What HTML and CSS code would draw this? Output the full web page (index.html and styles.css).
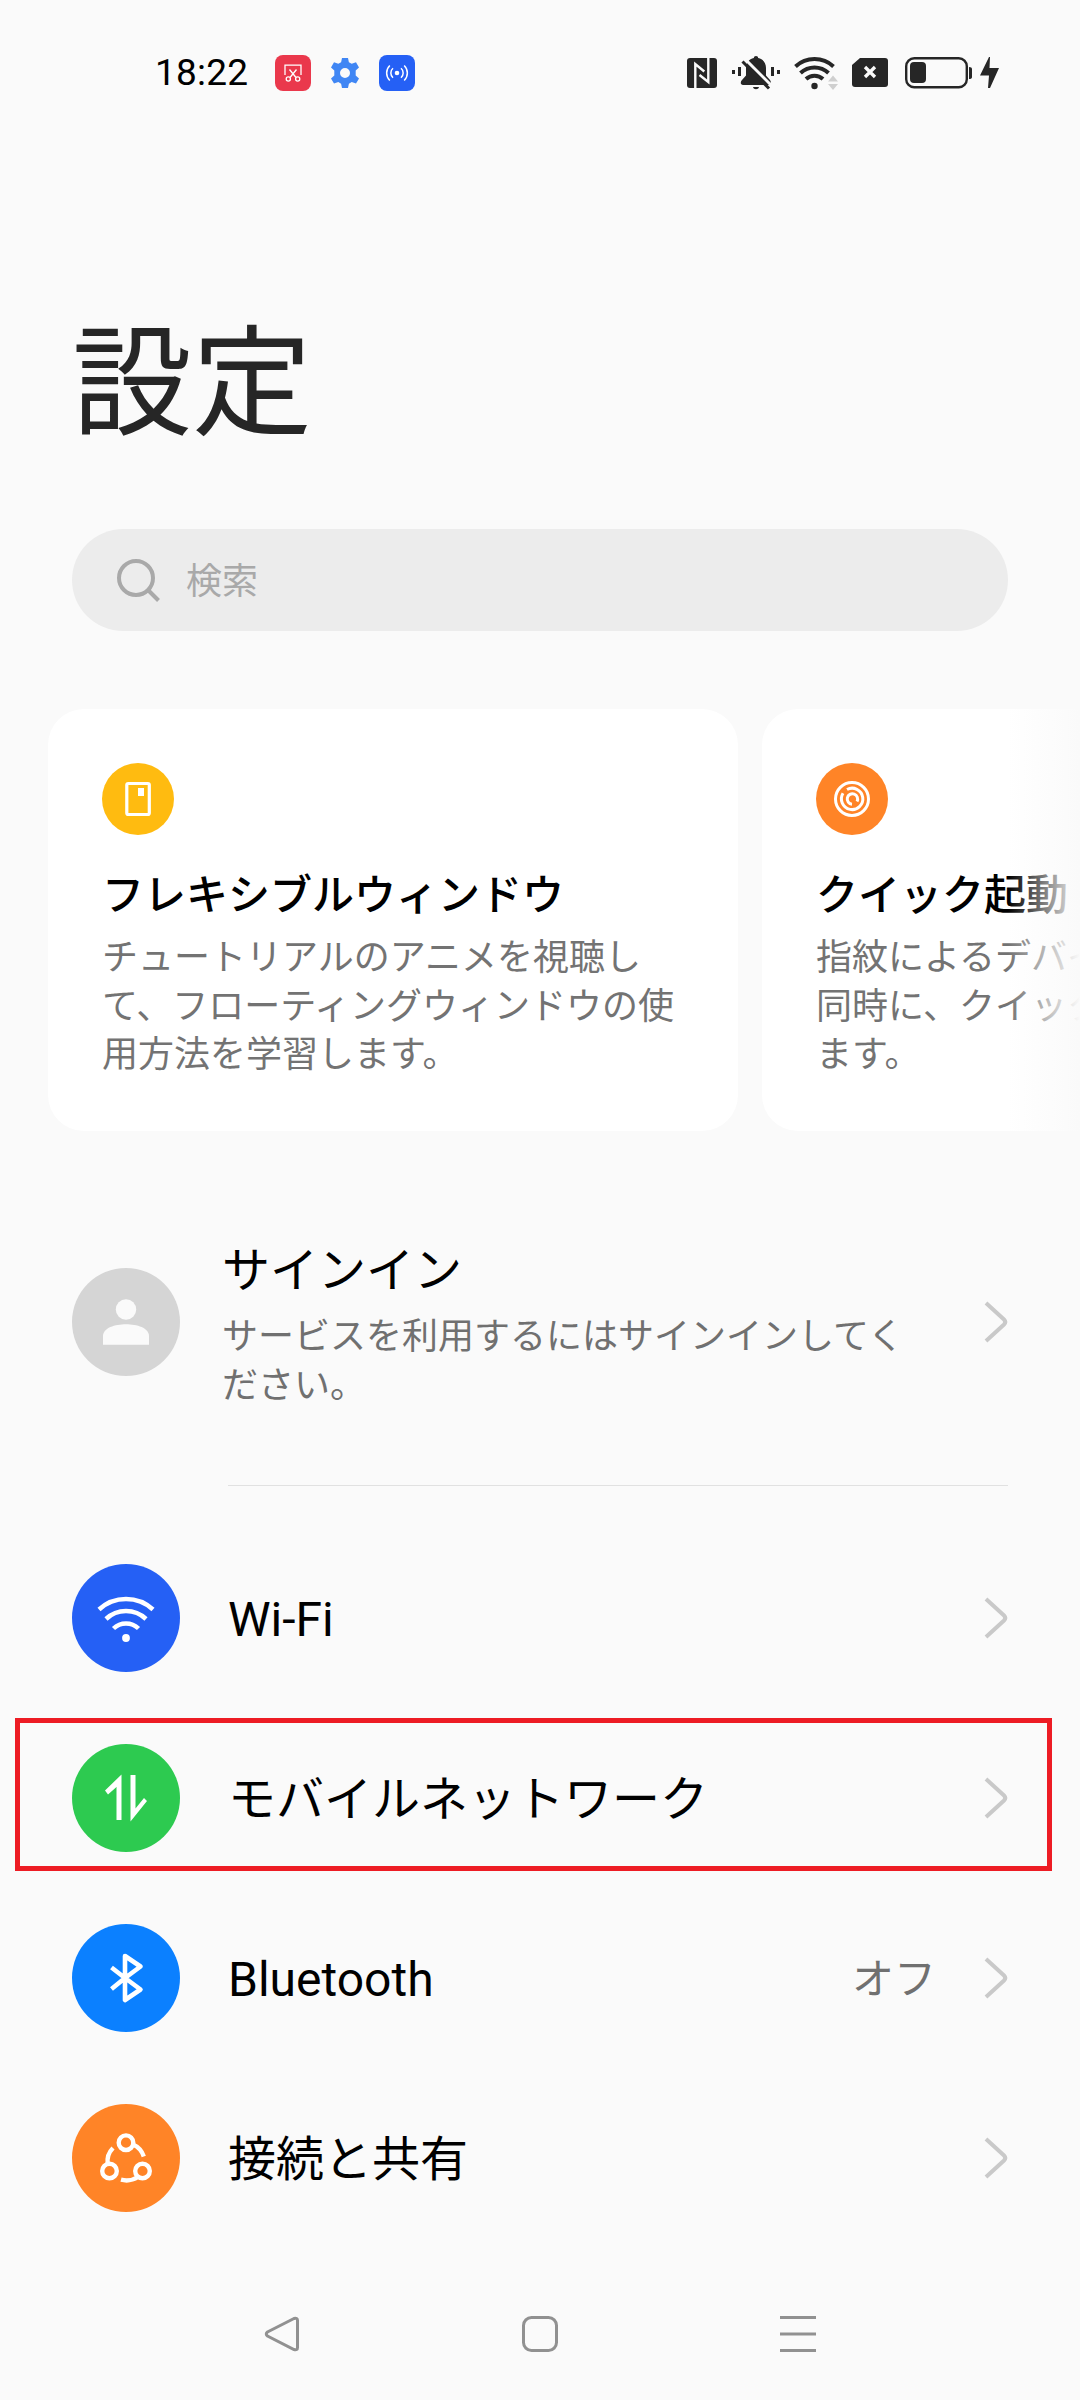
FILE: index.html
```html
<!DOCTYPE html>
<html lang="ja">
<head>
<meta charset="utf-8">
<title>設定</title>
<link rel="stylesheet" href="styles.css">
</head>
<body>
<header class="status">
  <div class="status-left">
    <span class="clock">18:22</span>
    <svg class="st-shot" width="36" height="36" viewBox="0 0 36 36"><rect width="36" height="36" rx="8" fill="#ea384c"/><g fill="none" stroke="#fff" stroke-width="1.300"><path d="M10 20V10.200h16V20M14.500 14.500l6.500 8M21.500 14.500l-6.500 8"/><circle cx="13.300" cy="24" r="2.100"/><circle cx="22.700" cy="24" r="2.100"/></g></svg>
    <svg class="st-gear" width="30" height="30" viewBox="0 0 30 30"><path fill="#4086f4" fill-rule="evenodd" d="M12 0h6l.9 4.200 2.800 1.600 4.300-1.500 3 5.200-3.300 3v4.900l3.300 3-3 5.200-4.300-1.500-2.800 1.600L18 30h-6l-.9-4.300-2.800-1.600L4 25.600l-3-5.200 3.300-3v-4.900L1 9.500l3-5.200 4.300 1.500 2.800-1.600zM15 10a5 5 0 1 0 0 10a5 5 0 1 0 0-10z"/></svg>
    <svg class="st-cast" width="36" height="36" viewBox="0 0 36 36"><rect width="36" height="36" rx="8" fill="#2560f5"/><circle cx="18" cy="18" r="2.300" fill="#fff"/><g fill="none" stroke="#fff" stroke-width="1.500"><path d="M14 13.300a6.200 6.200 0 0 0 0 9.400M22 13.300a6.200 6.200 0 0 1 0 9.400M10.800 10.500a10.500 10.500 0 0 0 0 15M25.200 10.500a10.500 10.500 0 0 1 0 15"/></g></svg>
  </div>
  <div class="status-right">
    <svg width="30" height="30" viewBox="0 0 30 30"><rect width="30" height="30" rx="3" fill="#262626"/><path fill="none" stroke="#fafafa" stroke-width="2.400" d="M8.300 30V6L17.300 13.500M21.300 0v24L12.500 17"/></svg>
    <svg class="st-bell" width="48" height="34" viewBox="0 0 48 34"><g fill="#262626"><path d="M0 14h3v4H0zM6 11h3v9H6zM39 11h3v9h-3zM45 14h3v4h-3z"/><path d="M24 0c1.500 0 2 .8 2.200 2C31 3 34 7 34 12v7.500l4 4.500c1.500 2 1 5-1 5H11c-2.500 0-3-3-1-5l4-4.500V12c0-5 3-9 7.800-10C22 .8 22.500 0 24 0zM21 31h6c-.5 3-5.500 3-6 0z"/></g><path d="M12.500 2.500l28 28" stroke="#fafafa" stroke-width="3"/><path d="M10.500 5.500l26.500 27" stroke="#262626" stroke-width="3"/></svg>
    <svg class="st-wifi" width="44" height="34" viewBox="0 0 44 34"><g fill="none" stroke="#262626" stroke-width="4"><path d="M1.500 10.500a28 28 0 0 1 38 0M6.500 17a20.500 20.500 0 0 1 28 0M12 23a12.500 12.500 0 0 1 17 0"/></g><circle cx="20.500" cy="30" r="3.200" fill="#262626"/><path fill="#cfcfcf" d="M34 25.500l5-6 5 6zM34 28h10l-5 6z"/></svg>
    <svg class="st-sim" width="36" height="30" viewBox="0 0 36 30"><path fill="#262626" d="M8 0h25a3 3 0 0 1 3 3v23a3 3 0 0 1-3 3H3a3 3 0 0 1-3-3V7z"/><path d="M13 9l10 10M23 9L13 19" stroke="#fafafa" stroke-width="3.300"/></svg>
    <svg class="st-batt" width="94" height="32" viewBox="0 0 94 32"><rect x="1.200" y="1.200" width="60.600" height="29" rx="8" fill="none" stroke="#262626" stroke-width="2.400"/><rect x="5" y="5" width="16" height="21" rx="4" fill="#262626"/><path fill="#262626" d="M64 10q3 0 3 2v8q0 2-3 2zM84 0L75 18.500h9L83 31h2L94 11H84.500L85 0z"/></svg>
  </div>
</header>

<h1 class="title">設定</h1>

<div class="search">
  <svg width="44" height="44" viewBox="0 0 44 44" fill="none" stroke="#a9a9a9" stroke-width="4"><circle cx="20" cy="20" r="17"/><path d="M32 32l10.500 10.500"/></svg>
  <span>検索</span>
</div>

<section class="cards">
  <article class="card">
    <svg class="card-icon" viewBox="0 0 72 72"><circle cx="36" cy="36" r="36" fill="#ffbb10"/><rect x="24.800" y="20.500" width="22.500" height="31" rx="1.500" fill="none" stroke="#fff" stroke-width="3.200"/><path fill="#fff" d="M36 25h6v8h-6z"/></svg>
    <h2>フレキシブルウィンドウ</h2>
    <p>チュートリアルのアニメを視聴し<br>て、フローティングウィンドウの使<br>用方法を学習します。</p>
  </article>
  <article class="card">
    <svg class="card-icon" viewBox="0 0 72 72"><circle cx="36" cy="36" r="36" fill="#ff8427"/><g fill="none" stroke="#fff" stroke-width="3"><circle cx="36" cy="36" r="16.500"/><path d="M31 26.500A10.700 10.700 0 1 1 27 30.300M41 38.500A5.200 5.200 0 1 0 36 41.200"/></g></svg>
    <h2>クイック起動</h2>
    <p>指紋によるデバイ<br>同時に、クイック<br>ます。</p>
  </article>
  <div class="fade"></div>
</section>

<section class="account">
  <svg class="round" viewBox="0 0 108 108"><circle cx="54" cy="54" r="54" fill="#d5d5d5"/><circle cx="54" cy="41.500" r="10.200" fill="#fafafa"/><path fill="#fafafa" d="M31 76.800V68C31 60 43 56.300 54 56.300S77 60 77 68v8.800z"/></svg>
  <div class="account-text">
    <h2>サインイン</h2>
    <p>サービスを利用するにはサインインしてく<br>ださい。</p>
  </div>
  <svg class="chev" viewBox="0 0 24 42"><path d="M2 2l18 16.500q2.500 2.500 0 5L2 40"/></svg>
</section>
<hr class="rule">

<ul class="list">
  <li>
    <svg class="round" viewBox="0 0 108 108"><circle cx="54" cy="54" r="54" fill="#2560f5"/><g fill="none" stroke="#fff" stroke-width="4.500"><path d="M27 45.500a40 40 0 0 1 54 0M34 55a29 29 0 0 1 40 0M41.500 64.500a18 18 0 0 1 25 0"/></g><circle cx="54" cy="74" r="3.900" fill="#fff"/></svg>
    <span class="label latin">Wi-Fi</span>
    <svg class="chev" viewBox="0 0 24 42"><path d="M2 2l18 16.500q2.500 2.500 0 5L2 40"/></svg>
  </li>
  <li class="marked">
    <svg class="round" viewBox="0 0 108 108"><circle cx="54" cy="54" r="54" fill="#2dca50"/><path fill="#fff" d="M49.500 30.500V76h-5V43L36 50.500l-3-4zM58.500 31h5v33.500l8.500-10.500 3 3L58.500 77.500z"/></svg>
    <span class="label">モバイルネットワーク</span>
    <svg class="chev" viewBox="0 0 24 42"><path d="M2 2l18 16.500q2.500 2.500 0 5L2 40"/></svg>
  </li>
  <li>
    <svg class="round" viewBox="0 0 108 108"><circle cx="54" cy="54" r="54" fill="#0b80ff"/><path fill="none" stroke="#fff" stroke-width="4.600" stroke-linejoin="round" d="M39.500 43.500L53 54L68.500 65.500L53 76V32L68.500 42.500L53 54L39.500 65"/></svg>
    <span class="label latin">Bluetooth</span>
    <span class="value">オフ</span>
    <svg class="chev" viewBox="0 0 24 42"><path d="M2 2l18 16.500q2.500 2.500 0 5L2 40"/></svg>
  </li>
  <li>
    <svg class="round" viewBox="0 0 108 108"><circle cx="54" cy="54" r="54" fill="#ff8427"/><g fill="none" stroke="#fff" stroke-width="4.400"><circle cx="54" cy="38.700" r="7.300"/><circle cx="37.500" cy="67" r="7.300"/><circle cx="70.500" cy="67" r="7.300"/><path d="M61 40.500Q69 44 71.800 52.500M41 44Q34.500 50.500 35.700 60M49 75.700Q58 78 66 73"/></g></svg>
    <span class="label">接続と共有</span>
    <svg class="chev" viewBox="0 0 24 42"><path d="M2 2l18 16.500q2.500 2.500 0 5L2 40"/></svg>
  </li>
</ul>

<nav class="navbar">
  <svg width="36" height="36" viewBox="0 0 36 36"><path d="M30 2.500L3.500 16q-2.500 2 0 4L30 33.500q3.500 1 3.500-2v-27q0-3-3.500-2z"/></svg>
  <svg width="36" height="36" viewBox="0 0 36 36"><rect x="1.500" y="1.500" width="33" height="33" rx="8"/></svg>
  <svg width="36" height="36" viewBox="0 0 36 36"><path d="M0 1.500h36M0 18h36M0 34.500h36"/></svg>
</nav>
</body>
</html>
```
FILE: styles.css
```css
*, *::after { box-sizing: border-box; margin: 0; padding: 0; }
body {
  width: 1080px;
  height: 2400px;
  overflow: hidden;
  background: #fafafa;
  color: #000;
  font-family: "Noto Sans CJK JP", sans-serif;
  display: flex;
  flex-direction: column;
}
svg { display: block; flex: none; }
h1, h2 { font-weight: 400; }

.status {
  height: 146px;
  padding: 0 81px 0 155px;
  display: flex;
  justify-content: space-between;
  align-items: center;
}
.status-left, .status-right { display: flex; align-items: center; }
.clock { width: 120px; font: 400 37px/44px Roboto, sans-serif; letter-spacing: 0.2px; }
.st-gear { margin-left: 19px; }
.st-cast { margin-left: 19px; }
.st-bell { margin-left: 15px; }
.st-wifi { margin-left: 14px; }
.st-sim { margin-left: 14px; }
.st-batt { margin-left: 17px; }

.title {
  margin: 168px 0 0 72px;
  font-size: 120px;
  line-height: 120px;
  color: #262626;
}

.search {
  margin: 95px 72px 0;
  height: 102px;
  padding-left: 44px;
  border-radius: 51px;
  background: #ececec;
  color: #a9a9a9;
  display: flex;
  align-items: center;
  gap: 26px;
  font-size: 36px;
  line-height: 48px;
}
.search span { padding-bottom: 4px; }

.cards {
  position: relative;
  margin-top: 78px;
  height: 422px;
  padding-left: 48px;
  display: flex;
  gap: 24px;
  overflow: hidden;
}
.card {
  flex: none;
  width: 690px;
  padding: 54px;
  border-radius: 36px;
  background: #fff;
}
.card-icon { width: 72px; height: 72px; }
.card h2 {
  margin-top: 27px;
  font-size: 42px;
  line-height: 60px;
  font-weight: 500;
  white-space: nowrap;
}
.card p {
  margin-top: 8px;
  font-size: 36px;
  line-height: 48.7px;
  color: #737373;
  white-space: nowrap;
}
.fade {
  position: absolute;
  top: 0;
  right: 0;
  width: 72px;
  height: 100%;
  background: linear-gradient(to right, rgba(250,250,250,0), #fafafa);
}

.round { width: 108px; height: 108px; }
.chev {
  width: 24px;
  height: 42px;
  margin-left: auto;
  fill: none;
  stroke: #c9c9c9;
  stroke-width: 4;
}
.account {
  margin-top: 30px;
  height: 322px;
  padding: 0 72px;
  display: flex;
  align-items: center;
}
.account-text { margin-left: 42px; padding-bottom: 6px; }
.account-text h2 { font-size: 48px; line-height: 70px; }
.account-text p {
  margin-top: 8px;
  font-size: 36px;
  line-height: 49px;
  color: #707070;
  white-space: nowrap;
}
.rule { margin: 2px 72px 0 228px; height: 1px; border: 0; background: #e1e1e1; }

.list { margin-top: 42px; list-style: none; }
.list li {
  position: relative;
  height: 180px;
  padding: 0 72px;
  display: flex;
  align-items: center;
}
.label { margin-left: 48px; font-size: 48px; line-height: 70px; padding-bottom: 6px; }
.latin { font-family: Roboto, sans-serif; padding: 3px 0 0; }
.value { margin-left: auto; font-size: 42px; line-height: 60px; padding-bottom: 4px; color: #707070; }
.value + .chev { margin-left: 48px; }
/* highlight frame over the row */
.marked::after {
  content: "";
  position: absolute;
  left: 15px;
  top: 10px;
  width: 1037px;
  height: 153px;
  border: 5px solid #ed1c24;
}

.navbar {
  margin-top: 20px;
  height: 132px;
  padding: 0 264px;
  display: flex;
  justify-content: space-between;
  align-items: center;
}
.navbar svg { fill: none; stroke: #919191; stroke-width: 3; }
```
